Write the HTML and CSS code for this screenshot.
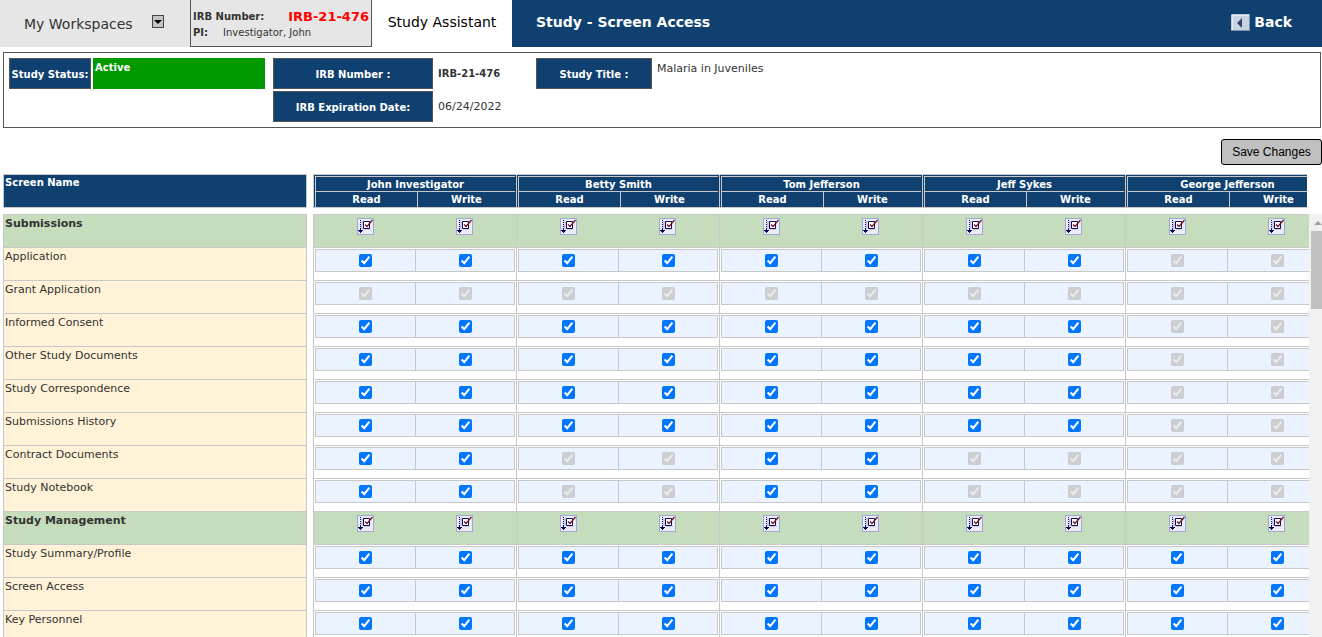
FILE: index.html
```html
<!DOCTYPE html>
<html lang="en">
<head>
  <meta charset="UTF-8">
  <meta name="viewport" content="width=device-width, initial-scale=1.0">
  <title>Study - Screen Access</title>
  <link rel="stylesheet" href="styles.css">
</head>
<body>
  <svg class="sprites" aria-hidden="true">
    <symbol id="check-all" viewBox="0 0 17 17">
      <rect x="0.5" y="0.5" width="16" height="16" fill="#ececf2" stroke="#9ca9da"/>
      <path d="M4 3h2v8H4zM7 11h7v1H7z" fill="#d0c8f4"/>
      <path d="M3.5 2v10" stroke="#0c0860" stroke-dasharray="1 1"/>
      <path d="M3 10h1v2h2v1H5v1H4v1H3v-1H2v-1H1v-1h2z" fill="#0c0860"/>
      <path d="M6.500 3.500h6v7h-6z" fill="#fff" stroke="#100c50"/>
      <path d="M8 6.500l2 2L15.500 2" fill="none" stroke="#701020" stroke-width="1.2"/>
    </symbol>
  </svg>

  <header class="topbar">
    <div class="workspaces">
      <span>My Workspaces</span>
      <button class="drop" aria-label="Open workspaces">
        <svg width="12" height="13" viewBox="0 0 12 13">
          <rect x="0.5" y="0.5" width="11" height="12" fill="#c4c4c4" stroke="#444"/>
          <path d="M2 5h8L6 9z" fill="#000"/>
        </svg>
      </button>
    </div>
    <div class="study-ref">
      <div><b>IRB Number:</b><strong>IRB-21-476</strong></div>
      <div><b>PI:</b><span>Investigator, John</span></div>
    </div>
    <a class="tab" href="#">Study Assistant</a>
    <div class="title">
      <h1>Study - Screen Access</h1>
      <a class="back" href="#">
        <svg width="19" height="17" viewBox="0 0 19 17">
          <rect x="0.5" y="0.5" width="18" height="16" fill="#c9d4e2" stroke="#8193aa"/>
          <path d="M1 16V1h17" fill="none" stroke="#fff"/>
          <path d="M11 4v10L6 9z" fill="#34456c"/>
        </svg>
        Back
      </a>
    </div>
  </header>

  <section class="info">
    <div class="label status-label">Study Status:</div>
    <div class="status">Active</div>
    <div class="label irb-label">IRB Number :</div>
    <div class="value"><b>IRB-21-476</b></div>
    <div class="label">Study Title :</div>
    <div class="study-title">Malaria in Juveniles</div>
    <div class="label irb-label">IRB Expiration Date:</div>
    <div class="value">06/24/2022</div>
  </section>

  <div class="actions">
    <button class="save">Save Changes</button>
  </div>

  <main>
    <div class="heads">
      <div class="screen-head">Screen Name</div>
      <div class="access-head">
        <table class="users">
          <thead><tr id="users"></tr></thead>
        </table>
      </div>
    </div>
    <div class="lists">
      <table class="screens">
        <tbody id="screens"></tbody>
      </table>
      <div class="access-list">
        <table class="access">
          <tbody id="access"></tbody>
        </table>
      </div>
      <div class="scrollbar"><div class="arrow"></div><div class="thumb"></div></div>
    </div>
  </main>

  <script>
    const users = ['John Investigator', 'Betty Smith', 'Tom Jefferson', 'Jeff Sykes', 'George Jefferson'];

    // one character per user: 1 = editable, 0 = locked
    const rows = [
      ['Submissions'],
      ['Application', '11110'],
      ['Grant Application', '00000'],
      ['Informed Consent', '11110'],
      ['Other Study Documents', '11110'],
      ['Study Correspondence', '11110'],
      ['Submissions History', '11110'],
      ['Contract Documents', '10100'],
      ['Study Notebook', '10100'],
      ['Study Management'],
      ['Study Summary/Profile', '11111'],
      ['Screen Access', '11111'],
      ['Key Personnel', '11111']
    ];

    document.getElementById('users').innerHTML = users.map(u => `
      <th><div class="user"><span class="name">${u}</span><span>Read</span><span>Write</span></div></th>`).join('');

    document.getElementById('screens').innerHTML = rows.map(([name, access]) =>
      access ? `<tr><td>${name}</td></tr>` : `<tr class="group"><th>${name}</th></tr>`).join('');

    function cell(name, user, flag) {
      return '<td><div class="pair">' + ['Read', 'Write'].map(mode => {
        const label = `${name}, ${user}, ${mode}`;
        return flag === undefined
          ? `<button class="all" aria-label="Check all: ${label}"><svg width="17" height="17"><use href="#check-all"/></svg></button>`
          : `<label><input type="checkbox" aria-label="${label}" checked ${flag === '0' ? 'disabled' : ''}></label>`;
      }).join('') + '</div></td>';
    }

    document.getElementById('access').innerHTML = rows.map(([name, access]) =>
      `<tr class="${access ? '' : 'group'}">` +
      users.map((u, i) => cell(name, u, access ? access[i] : undefined)).join('') +
      '</tr>').join('');
  </script>
</body>
</html>
```
FILE: styles.css
```css
* {
  box-sizing: border-box;
}
body {
  margin: 0;
  height: 100vh;
  display: flex;
  flex-direction: column;
  overflow: hidden;
  font-family: Verdana, "DejaVu Sans", sans-serif;
  font-size: 11px;
  line-height: 14px;
  color: #333;
  background: #fff;
}
button {
  padding: 0;
  border: none;
  background: none;
  cursor: pointer;
}
svg {
  display: block;
}
a {
  text-decoration: none;
}
.sprites {
  position: absolute;
  width: 0;
  height: 0;
}

/* top bar */
.topbar {
  display: flex;
  flex: none;
  height: 47px;
  font-size: 14px;
}
.workspaces {
  display: flex;
  justify-content: space-between;
  width: 190px;
  padding: 15px 26px 0 24px;
  line-height: 18px;
  background: #e6e6e6;
}
.drop {
  height: 13px;
}
.study-ref {
  width: 182px;
  padding: 9px 2px 0;
  border: 1px solid #555;
  border-top: none;
  background: #e6e6e6;
  font-size: 10px;
}
.study-ref div {
  display: flex;
  justify-content: space-between;
  line-height: 16px;
}
.study-ref div + div {
  justify-content: flex-start;
  gap: 15px;
}
.study-ref strong {
  font-size: 13px;
  color: #f00;
}
.tab {
  width: 140px;
  text-align: center;
  line-height: 44px;
  color: #000;
}
.title {
  flex: 1;
  display: flex;
  justify-content: space-between;
  padding: 0 30px 0 24px;
  line-height: 44px;
  color: #fff;
  background: #104070;
}
h1 {
  margin: 0;
  font-size: 14px;
}
.back {
  display: flex;
  align-items: center;
  gap: 4px;
  height: 44px;
  font-weight: bold;
  color: #fff;
}

/* study summary */
.info {
  flex: none;
  display: grid;
  grid-template-columns: 82px 178px 160px 99px 116px 1fr;
  grid-template-rows: 31px 31px;
  gap: 2px;
  margin: 5px 1px 0 3px;
  padding: 5px;
  height: 76px;
  border: 1px solid #555;
}
.label {
  border: 1px solid #555;
  background: #104070;
  color: #fff;
  font-size: 10px;
  font-weight: bold;
  line-height: 31px;
  text-align: center;
  white-space: nowrap;
}
.irb-label {
  grid-column: 3;
}
.status {
  margin-right: 6px;
  padding: 3px 2px;
  background: #090;
  color: #fff;
  font-size: 10px;
  font-weight: bold;
}
.value {
  padding-left: 3px;
  line-height: 32px;
}
.value b {
  font-size: 10px;
}
.study-title {
  padding: 4px 3px;
}
.actions {
  flex: none;
  display: flex;
  justify-content: flex-end;
  padding: 11px 0 9px;
}
.save {
  width: 101px;
  height: 26px;
  border: 1px solid #000;
  border-radius: 3px;
  background: #c0c0c0;
  color: #000;
  font: 12px Arial, "Liberation Sans", sans-serif;
}

/* access lists */
main {
  flex: 1;
  min-height: 0;
  display: flex;
  flex-direction: column;
  gap: 6px;
  padding-left: 3px;
}
.heads {
  display: flex;
  flex: none;
  gap: 6px;
  padding-right: 15px;
}
.lists {
  display: flex;
  flex: 1;
  min-height: 0;
  overflow: hidden;
}
table {
  border-spacing: 0;
  table-layout: fixed;
}
th, td {
  padding: 0;
  text-align: left;
  vertical-align: top;
}
.screen-head {
  flex: none;
  width: 304px;
  height: 34px;
  padding: 1px;
  border: 1px solid #c8c8c8;
  background: #104070;
  color: #fff;
  font-size: 10px;
  font-weight: bold;
}
.access-head, .access-list {
  flex: 1;
  min-width: 0;
  overflow: hidden;
}
.users, .access {
  width: 1015px;
}
.users th {
  height: 34px;
  padding: 1px 0 0 1px;
  border: 1px solid #c8c8c8;
  border-right: none;
  background: #104070;
}
.user {
  display: grid;
  grid-template-columns: 102px 1fr;
  grid-template-rows: 15px 16px;
  height: 31px;
  margin-right: 1px;
  color: #fff;
  font-size: 10px;
  line-height: 15px;
  text-align: center;
}
.user span {
  border-left: 1px solid #c8c8c8;
  border-top: 1px solid #c8c8c8;
}
.user .name {
  grid-column: 1 / 3;
}
.screens {
  flex: none;
  align-self: flex-start;
  width: 304px;
  margin-right: 6px;
  border: solid #c8c8c8;
  border-width: 0 1px;
}
.screens th, .screens td {
  height: 33px;
  padding: 2px 1px;
  border-top: 1px solid #c8c8c8;
  background: #fff2d6;
}
.screens .group th, .access .group td {
  background: #c6ddbd;
}
.access td {
  height: 33px;
  padding: 1px;
  border-left: 1px solid #c8c8c8;
  border-top: 1px solid #c8c8c8;
}
.pair {
  display: grid;
  grid-template-columns: 1fr 1fr;
  height: 23px;
  border: 1px solid #c8c8c8;
  background: #eaf3ff;
}
.pair label {
  display: flex;
  align-items: center;
  justify-content: center;
}
.pair label + label {
  border-left: 1px solid #c8c8c8;
}
.pair input {
  width: 13px;
  height: 13px;
  margin: 0;
}
.group .pair {
  border-color: transparent;
  background: none;
}
.all {
  display: flex;
  justify-content: center;
  padding-top: 1px;
}

/* right edge scrollbar */
.scrollbar {
  flex: none;
  width: 13px;
  padding-left: 2px;
  background: #f1f1f1;
}
.arrow {
  width: 0;
  margin: 7px 0 6px 3px;
  border: 4px solid transparent;
  border-top: none;
  border-bottom-color: #a0a0a0;
}
.thumb {
  height: 78px;
  background: #c1c1c1;
}
```
